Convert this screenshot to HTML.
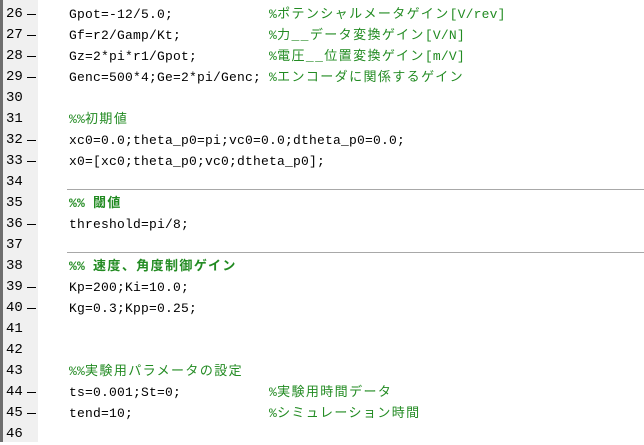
<!DOCTYPE html>
<html><head><meta charset="utf-8"><style>
body{margin:0;width:644px;height:442px;background:#fff;overflow:hidden;position:relative;font-family:"Liberation Mono","Noto Sans CJK JP",monospace;font-size:13px;}
.bar{position:absolute;left:0;top:0;width:3px;height:442px;background:#6e6e6e}
.gut{position:absolute;left:3px;top:0;width:35px;height:442px;background:#f0f0f0}
.row{position:absolute;left:0;height:21px;line-height:21px;white-space:pre;}
.n{position:absolute;left:6px;color:#000;font-size:14px}
.d{position:absolute;left:27px;top:10px;width:9px;height:1px;background:#000}
.c{position:absolute;left:69px;letter-spacing:0.2px}
.g{color:#228b22}
.j{letter-spacing:1.4px}
.b{font-weight:bold}
.sep{position:absolute;left:67px;right:0;height:1px;background:#a8a8a8}
</style></head><body>
<div class="bar"></div><div class="gut"></div>
<div class="sep" style="top:189px"></div>
<div class="sep" style="top:252px"></div>
<div class="row" style="top:4px"><span class="n">26</span><span class="d"></span><span class="c">Gpot=-12/5.0;            <span class="g">%<span class="j">ポテンシャルメータゲイン</span>[V/rev]</span></span></div>
<div class="row" style="top:25px"><span class="n">27</span><span class="d"></span><span class="c">Gf=r2/Gamp/Kt;           <span class="g">%<span class="j">力__データ変換ゲイン</span>[V/N]</span></span></div>
<div class="row" style="top:46px"><span class="n">28</span><span class="d"></span><span class="c">Gz=2*pi*r1/Gpot;         <span class="g">%<span class="j">電圧__位置変換ゲイン</span>[m/V]</span></span></div>
<div class="row" style="top:67px"><span class="n">29</span><span class="d"></span><span class="c">Genc=500*4;Ge=2*pi/Genc; <span class="g">%<span class="j">エンコーダに関係するゲイン</span></span></span></div>
<div class="row" style="top:88px"><span class="n">30</span></div>
<div class="row" style="top:109px"><span class="n">31</span><span class="c g">%%<span class="j">初期値</span></span></div>
<div class="row" style="top:130px"><span class="n">32</span><span class="d"></span><span class="c">xc0=0.0;theta_p0=pi;vc0=0.0;dtheta_p0=0.0;</span></div>
<div class="row" style="top:151px"><span class="n">33</span><span class="d"></span><span class="c">x0=[xc0;theta_p0;vc0;dtheta_p0];</span></div>
<div class="row" style="top:172px"><span class="n">34</span></div>
<div class="row" style="top:193px"><span class="n">35</span><span class="c g b">%% <span class="j">閾値</span></span></div>
<div class="row" style="top:214px"><span class="n">36</span><span class="d"></span><span class="c">threshold=pi/8;</span></div>
<div class="row" style="top:235px"><span class="n">37</span></div>
<div class="row" style="top:256px"><span class="n">38</span><span class="c g b">%% <span class="j">速度、角度制御ゲイン</span></span></div>
<div class="row" style="top:277px"><span class="n">39</span><span class="d"></span><span class="c">Kp=200;Ki=10.0;</span></div>
<div class="row" style="top:298px"><span class="n">40</span><span class="d"></span><span class="c">Kg=0.3;Kpp=0.25;</span></div>
<div class="row" style="top:319px"><span class="n">41</span></div>
<div class="row" style="top:340px"><span class="n">42</span></div>
<div class="row" style="top:361px"><span class="n">43</span><span class="c g">%%<span class="j">実験用パラメータの設定</span></span></div>
<div class="row" style="top:382px"><span class="n">44</span><span class="d"></span><span class="c">ts=0.001;St=0;           <span class="g">%<span class="j">実験用時間データ</span></span></span></div>
<div class="row" style="top:403px"><span class="n">45</span><span class="d"></span><span class="c">tend=10;                 <span class="g">%<span class="j">シミュレーション時間</span></span></span></div>
<div class="row" style="top:424px"><span class="n">46</span></div>
</body></html>
